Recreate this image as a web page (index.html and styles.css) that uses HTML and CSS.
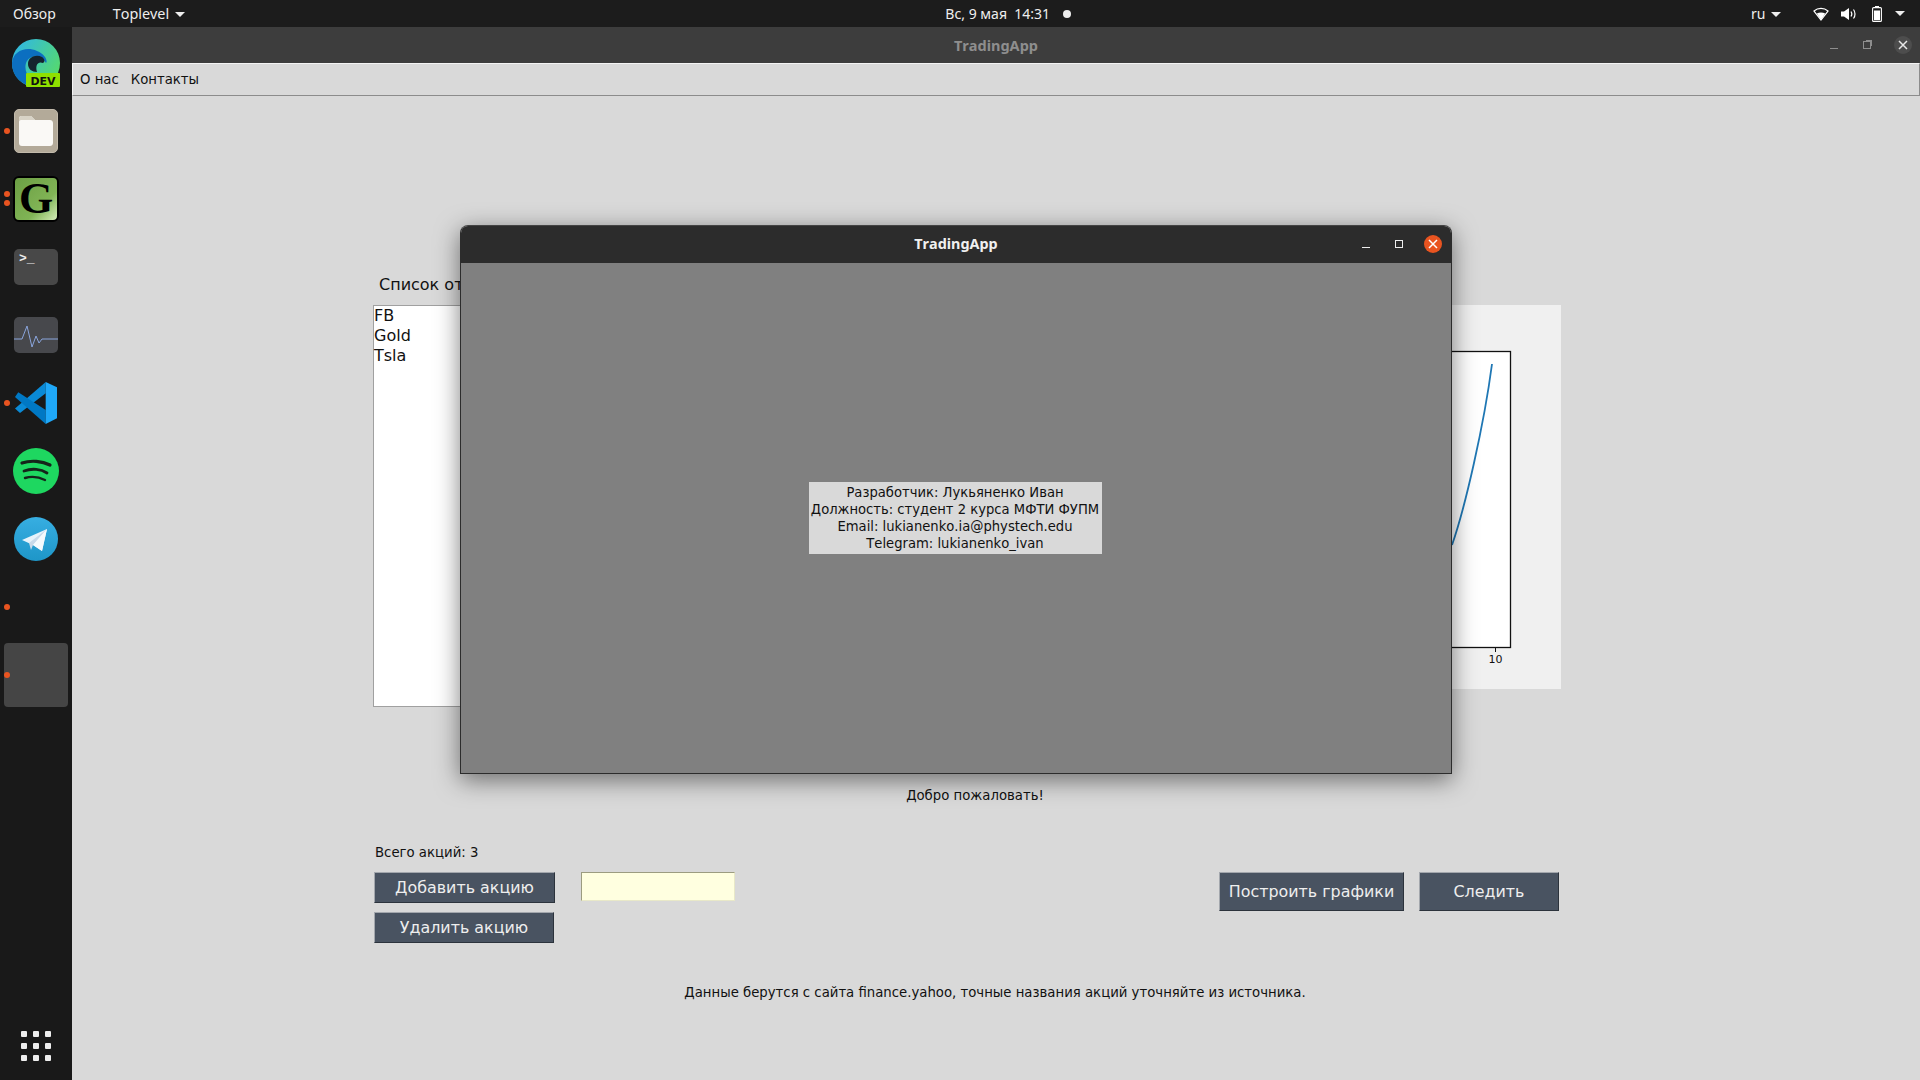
FILE: index.html
```html
<!DOCTYPE html>
<html lang="ru">
<head>
    <meta charset="UTF-8">
    <title>TradingApp</title>
    <link rel="stylesheet" href="styles.css">
</head>
<body>
    <header class="topbar">
        <div class="topbar-left">
            <span class="overview">Обзор</span>
            <span class="app-menu">Toplevel <i class="caret"></i></span>
        </div>
        <div class="clock">Вс, 9 мая&nbsp; 14:31 <i class="clock-dot"></i></div>
        <div class="tray">
            <span class="lang">ru <i class="caret"></i></span>
            <svg class="tray-wifi" width="16" height="14" viewBox="0 0 16 14"><path d="M1 4C5 0.5 11 0.5 15 4L8 13Z" fill="none" stroke="#fff" stroke-width="1.2"/><path d="M3.8 6.5C6.3 5 9.7 5 12.2 6.5L8 13Z" fill="#fff"/></svg>
            <svg class="tray-sound" width="16" height="14" viewBox="0 0 16 14"><path d="M0 4.5H3L8 1V13L3 9.5H0Z" fill="#fff"/><path d="M10 4.5C11 6 11 8 10 9.5M12.5 2.5C14.500 5 14.500 9 12.500 11.500" fill="none" stroke="#fff" stroke-width="1.2"/></svg>
            <svg class="tray-battery" width="10" height="16" viewBox="0 0 10 16"><rect x="3" y="0" width="4" height="2" fill="#fff"/><rect x="0.6" y="1.6" width="8.8" height="13.8" rx="1" fill="none" stroke="#fff" stroke-width="1.1"/><rect x="2" y="4.5" width="6" height="9.6" fill="#fff"/></svg>
            <i class="caret"></i>
        </div>
    </header>

    <div class="desktop">
        <nav class="dock">
            <div class="dock-item">
                <svg width="48" height="48" viewBox="0 0 48 48">
                    <defs>
                        <linearGradient id="edge-top" x1="0" y1="0" x2="1" y2="0.6"><stop offset="0" stop-color="#2cb4f0"/><stop offset="1" stop-color="#55d970"/></linearGradient>
                    </defs>
                    <circle cx="24" cy="24" r="24" fill="url(#edge-top)"/>
                    <path d="M0 24C1 12 14 7 25 12C33 15 36 22 34 24C28 15 17 16 14 24C11 34 20 44 30 47C14 50 0 40 0 24Z" fill="#0c6fc0"/>
                    <path d="M16 25C16 18 24 15 30 18C33 20 33 23 31 24C26 22 23 26 25 33C20 33 16 30 16 25Z" fill="#15232e"/>
                    <rect x="14" y="34" width="34" height="14" rx="1" fill="#8fe000"/>
                    <text x="31" y="45.500" class="edge-dev">DEV</text>
                </svg>
            </div>
            <div class="dock-item running">
                <div class="tile tile-files">
                    <svg width="34" height="30" viewBox="0 0 34 30"><path d="M2 0H12L16 4H31C32.500 4 34 5 34 7V27C34 29 32.500 30 31 30H3C1 30 0 29 0 27V2C0 1 1 0 2 0Z" fill="#faf9f6"/><path d="M0 2C0 1 1 0 2 0H12L16 4H2C1 4 0 5 0 6Z" fill="#d8d3c6"/></svg>
                </div>
            </div>
            <div class="dock-item running-two">
                <div class="tile tile-g">G</div>
            </div>
            <div class="dock-item">
                <div class="tile tile-term">&gt;_</div>
            </div>
            <div class="dock-item">
                <div class="tile tile-monitor">
                    <svg width="44" height="36" viewBox="0 0 44 36"><path d="M0 22H8L13 9L18 30L22 19L25 26L28 22H44" fill="none" stroke="#8aa5dc" stroke-width="1"/></svg>
                </div>
            </div>
            <div class="dock-item running">
                <svg width="44" height="44" viewBox="0 0 44 44">
                    <path d="M31.700 1V12.300L6 32L1 27.500Z" fill="#0a8ad6"/>
                    <path d="M4.300 11.300L31.700 29V43L1 16Z" fill="#0078c4"/>
                    <path d="M31.700 1L43 6.300V37.300L31.700 43Z" fill="#1fa8f8"/>
                </svg>
            </div>
            <div class="dock-item">
                <svg width="46" height="46" viewBox="0 0 46 46">
                    <circle cx="23" cy="23" r="23" fill="#1ed760"/>
                    <path d="M9 15C18 12 29 13 37 17" fill="none" stroke="#15241a" stroke-width="3.200" stroke-linecap="round"/>
                    <path d="M11 23C19 20 28 21 34 25" fill="none" stroke="#15241a" stroke-width="2.800" stroke-linecap="round"/>
                    <path d="M12 30C19 28 26 29 32 32" fill="none" stroke="#15241a" stroke-width="2.400" stroke-linecap="round"/>
                </svg>
            </div>
            <div class="dock-item">
                <svg width="44" height="44" viewBox="0 0 44 44">
                    <defs>
                        <linearGradient id="tg" x1="0" y1="0" x2="0" y2="1"><stop offset="0" stop-color="#37aee2"/><stop offset="1" stop-color="#1e96c8"/></linearGradient>
                    </defs>
                    <circle cx="22" cy="22" r="22" fill="url(#tg)"/>
                    <path d="M8 23L33 12L28 34L19 28Z" fill="#e6f3fb"/>
                    <path d="M15 26L33 12L19 28L17 33Z" fill="#c8daea"/>
                    <path d="M19 28L28 34L33 12Z" fill="#f4fafd"/>
                </svg>
            </div>
            <div class="dock-item running"></div>
            <div class="dock-item running">
                <div class="active-tile"></div>
            </div>
            <div class="apps-grid">
                <i></i><i></i><i></i><i></i><i></i><i></i><i></i><i></i><i></i>
            </div>
        </nav>

        <main class="window">
            <div class="titlebar">
                <span></span>
                <span class="title">TradingApp</span>
                <div class="win-controls">
                    <i class="ctl-min"></i>
                    <i class="ctl-restore"></i>
                    <span class="ctl-close"><svg width="10" height="10" viewBox="0 0 10 10"><path d="M1 1L9 9M9 1L1 9" stroke="#e8e8e8" stroke-width="1.500"/></svg></span>
                </div>
            </div>
            <div class="menubar">
                <span>О нас</span>
                <span>Контакты</span>
            </div>
            <div class="content">
                <div class="list-label">Список отслеживаемых акций</div>
                <div class="panels">
                    <div class="stock-list">
                        <div>FB</div>
                        <div>Gold</div>
                        <div>Tsla</div>
                    </div>
                    <div class="figure">
                        <svg width="821" height="384" viewBox="0 0 821 384">
                            <rect x="60.500" y="46.500" width="710" height="296" fill="#fff" stroke="#111" stroke-width="1.300"/>
                            <path d="M712 240C725 203 744 120 752 59" fill="none" stroke="#1f77b4" stroke-width="1.800"/>
                            <path d="M755.500 343V347" stroke="#111"/>
                            <text x="755.500" y="358" class="tick">10</text>
                        </svg>
                    </div>
                </div>
                <div class="welcome">Добро пожаловать!</div>
                <div class="total">Всего акций: 3</div>
                <div class="controls">
                    <div class="stock-actions">
                        <button class="btn btn-add">Добавить акцию</button>
                        <button class="btn btn-remove">Удалить акцию</button>
                    </div>
                    <input class="stock-input" type="text">
                    <div class="chart-actions">
                        <button class="btn btn-plot">Построить графики</button>
                        <button class="btn btn-watch">Следить</button>
                    </div>
                </div>
                <div class="source-note">Данные берутся с сайта finance.yahoo, точные названия акций уточняйте из источника.</div>
            </div>

            <div class="about">
                <div class="about-titlebar">
                    <span></span>
                    <span class="about-title">TradingApp</span>
                    <div class="about-controls">
                        <i class="ctl-min"></i>
                        <i class="ctl-max"></i>
                        <span class="about-close"><svg width="10" height="10" viewBox="0 0 10 10"><path d="M1 1L9 9M9 1L1 9" stroke="#fff" stroke-width="1.500"/></svg></span>
                    </div>
                </div>
                <div class="about-body">
                    <div class="about-info">
                        Разработчик: Лукьяненко Иван<br>
                        Должность: студент 2 курса МФТИ ФУПМ<br>
                        Email: lukianenko.ia@phystech.edu<br>
                        Telegram: lukianenko_ivan
                    </div>
                </div>
            </div>
        </main>
    </div>
</body>
</html>
```

FILE: styles.css
```css
* {
    box-sizing: border-box;
}
body {
    margin: 0;
    width: 1920px;
    height: 1080px;
    overflow: hidden;
    display: flex;
    flex-direction: column;
    font-family: "DejaVu Sans", sans-serif;
    font-kerning: none;
    background: #d9d9d9;
    color: #111;
}

/* top bar */
.topbar {
    height: 27px;
    background: #1c1c1c;
    color: #eee;
    font-family: "Noto Sans", sans-serif;
    font-size: 14px;
    display: grid;
    grid-template-columns: 1fr auto 1fr;
    align-items: center;
    flex-shrink: 0;
}
.topbar-left {
    display: flex;
    align-items: center;
    padding-left: 13px;
}
.app-menu {
    margin-left: 57px;
    font-size: 14.400px;
}
.caret {
    display: inline-block;
    width: 10px;
    height: 5px;
    border-left: 5px solid transparent;
    border-right: 5px solid transparent;
    border-top: 5px solid #eee;
    vertical-align: 2px;
    margin-left: 2px;
}
.clock {
    margin-left: 96px;
}
.clock-dot {
    display: inline-block;
    width: 8px;
    height: 8px;
    border-radius: 50%;
    background: #eee;
    margin-left: 9px;
    vertical-align: 1px;
}
.tray {
    display: flex;
    align-items: center;
    justify-content: flex-end;
    padding-right: 15px;
}
.lang {
    margin-right: 32px;
}
.tray-wifi {
    margin-right: 12px;
}
.tray-sound {
    margin-right: 15px;
}
.tray-battery {
    margin-right: 11px;
}

.desktop {
    flex: 1;
    display: flex;
    min-height: 0;
}

/* dock */
.dock {
    width: 72px;
    flex-shrink: 0;
    background: #191919;
    padding-top: 2px;
    display: flex;
    flex-direction: column;
    align-items: center;
}
.dock-item {
    width: 72px;
    height: 68px;
    flex-shrink: 0;
    display: flex;
    align-items: center;
    justify-content: center;
    position: relative;
}
.running::before,
.running-two::before,
.running-two::after {
    content: "";
    position: absolute;
    left: 4px;
    top: 31px;
    width: 6px;
    height: 6px;
    border-radius: 50%;
    background: #e95420;
}
.running-two::before {
    top: 26px;
}
.running-two::after {
    top: 35px;
}
.tile {
    width: 44px;
    border-radius: 5px;
    display: flex;
    align-items: center;
    justify-content: center;
}
.tile-files {
    height: 44px;
    background: #b3aa99;
    border: 1px solid #c2baab;
}
.tile-g {
    width: 46px;
    height: 46px;
    border: 2px solid #000;
    border-radius: 6px;
    background: linear-gradient(135deg, #6c9e44 0%, #80b455 65%, #d4ecb8 100%);
    color: #000;
    font-family: "Liberation Serif", serif;
    font-weight: bold;
    font-size: 44px;
    line-height: 1;
}
.tile-term {
    height: 36px;
    background: #484848;
    color: #eee;
    font-family: "Liberation Mono", monospace;
    font-size: 13px;
    font-weight: bold;
    align-items: flex-start;
    justify-content: flex-start;
    padding: 2px 0 0 5px;
}
.tile-monitor {
    height: 36px;
    background: #47484c;
}
.active-tile {
    width: 64px;
    height: 64px;
    border-radius: 4px;
    background: #454545;
}
.edge-dev {
    font-family: "DejaVu Sans", sans-serif;
    font-weight: bold;
    font-size: 11px;
    text-anchor: middle;
    fill: #111;
}
.apps-grid {
    margin-top: auto;
    margin-bottom: 19px;
    display: grid;
    grid-template-columns: repeat(3, 6px);
    gap: 6px;
}
.apps-grid i {
    height: 6px;
    border-radius: 1px;
    background: #eee;
}

/* main window */
.window {
    flex: 1;
    display: flex;
    flex-direction: column;
    position: relative;
}
.titlebar {
    height: 36px;
    background: #3d3d3d;
    display: grid;
    grid-template-columns: 1fr auto 1fr;
    align-items: center;
    font-family: "Noto Sans", sans-serif;
}
.title {
    color: #8e8e8e;
    font-weight: bold;
    font-size: 14.500px;
}
.win-controls {
    display: flex;
    align-items: center;
    justify-content: flex-end;
    padding-right: 8px;
}
.win-controls .ctl-min {
    width: 8px;
    height: 1px;
    margin-top: 6px;
    background: #8e8e8e;
}
.ctl-restore {
    width: 8px;
    height: 8px;
    border: 1px solid #8e8e8e;
    box-shadow: 2px -2px 0 -1px #8e8e8e;
    margin-left: 25px;
    margin-right: 23px;
}
.ctl-close {
    width: 18px;
    height: 18px;
    border-radius: 50%;
    background: #4d4d4d;
    display: flex;
    align-items: center;
    justify-content: center;
}
.menubar {
    height: 33px;
    background: #d9d9d9;
    border: 1px solid #f4f4f4;
    border-bottom: 1px solid #8c8c8c;
    border-right: 1px solid #8c8c8c;
    display: flex;
    align-items: center;
    gap: 12px;
    padding: 0 0 1px 7px;
    font-size: 13.280px;
}
.content {
    flex: 1;
    padding: 179px 343px 0 301px;
    display: flex;
    flex-direction: column;
}
.list-label {
    font-size: 16px;
    line-height: 20px;
    padding-left: 6px;
    white-space: nowrap;
}
.panels {
    height: 402px;
    margin-top: 10px;
    display: flex;
    justify-content: space-between;
    align-items: flex-start;
}
.stock-list {
    width: 360px;
    height: 402px;
    background: #fff;
    border: 1px solid #a0a0a0;
    font-size: 16px;
    line-height: 20px;
}
.figure {
    width: 821px;
    height: 384px;
    margin-right: 16px;
    background: #f0f0f0;
}
.figure svg {
    display: block;
}
.tick {
    font-family: "DejaVu Sans", sans-serif;
    font-size: 11px;
    text-anchor: middle;
    fill: #111;
}
.welcome {
    margin-top: 79px;
    font-size: 13.280px;
    line-height: 20px;
    text-align: center;
}
.total {
    margin-top: 37px;
    font-size: 13.280px;
    line-height: 20px;
    padding-left: 2px;
}
.controls {
    margin-top: 9px;
    display: flex;
    align-items: flex-start;
    padding-right: 18px;
}
.stock-actions {
    display: flex;
    flex-direction: column;
    align-items: flex-start;
    gap: 9px;
    padding-left: 1px;
}
.btn {
    background: #495361;
    color: #eee;
    font-family: "DejaVu Sans", sans-serif;
    font-size: 15.900px;
    border: 1px solid;
    border-color: #a3a7ad #2c333c #2c333c #a3a7ad;
    padding: 0;
    display: block;
}
.btn-add {
    width: 181px;
    height: 31px;
}
.btn-remove {
    width: 180px;
    height: 31px;
}
.stock-input {
    width: 154px;
    height: 29px;
    margin-left: 26px;
    background: #ffffe0;
    border: 1px solid;
    border-color: #9c9c80 #e8e8c8 #e8e8c8 #9c9c80;
    padding: 0;
}
.chart-actions {
    margin-left: auto;
    display: flex;
    gap: 15px;
}
.btn-plot {
    width: 185px;
    height: 39px;
}
.btn-watch {
    width: 140px;
    height: 39px;
}
.source-note {
    margin-top: 40px;
    padding-left: 40px;
    font-size: 13.280px;
    line-height: 20px;
    text-align: center;
}

/* about dialog over the main window */
.about {
    position: absolute;
    left: 388px;
    top: 198px;
    width: 992px;
    height: 549px;
    display: flex;
    flex-direction: column;
    border-radius: 8px 8px 0 0;
    box-shadow: 0 6px 24px rgba(0, 0, 0, 0.5);
    border: 1px solid #2c2c2c;
    border-top-color: #444;
    overflow: hidden;
}
.about-titlebar {
    height: 37px;
    flex-shrink: 0;
    background: #2c2c2c;
    display: grid;
    grid-template-columns: 1fr auto 1fr;
    align-items: center;
    padding-bottom: 1px;
}
.about-title {
    color: #f0f0f0;
    font-family: "Noto Sans", sans-serif;
    font-weight: bold;
    font-size: 14.400px;
    line-height: 18px;
    padding-bottom: 1px;
}
.about-controls {
    display: flex;
    align-items: center;
    justify-content: flex-end;
    padding-right: 9px;
}
.about-controls .ctl-min {
    width: 8px;
    height: 1px;
    margin-top: 7px;
    background: #eee;
}
.ctl-max {
    width: 8px;
    height: 8px;
    border: 1px solid #eee;
    margin-left: 25px;
}
.about-close {
    width: 18px;
    height: 18px;
    margin-left: 21px;
    border-radius: 50%;
    background: #e95420;
    display: flex;
    align-items: center;
    justify-content: center;
}
.about-body {
    flex: 1;
    background: #808080;
    display: flex;
    align-items: center;
    justify-content: center;
}
.about-info {
    width: 293px;
    height: 72px;
    margin-right: 2px;
    background: #d9d9d9;
    font-size: 13.160px;
    line-height: 17px;
    padding-top: 2px;
    text-align: center;
    white-space: nowrap;
}
```
